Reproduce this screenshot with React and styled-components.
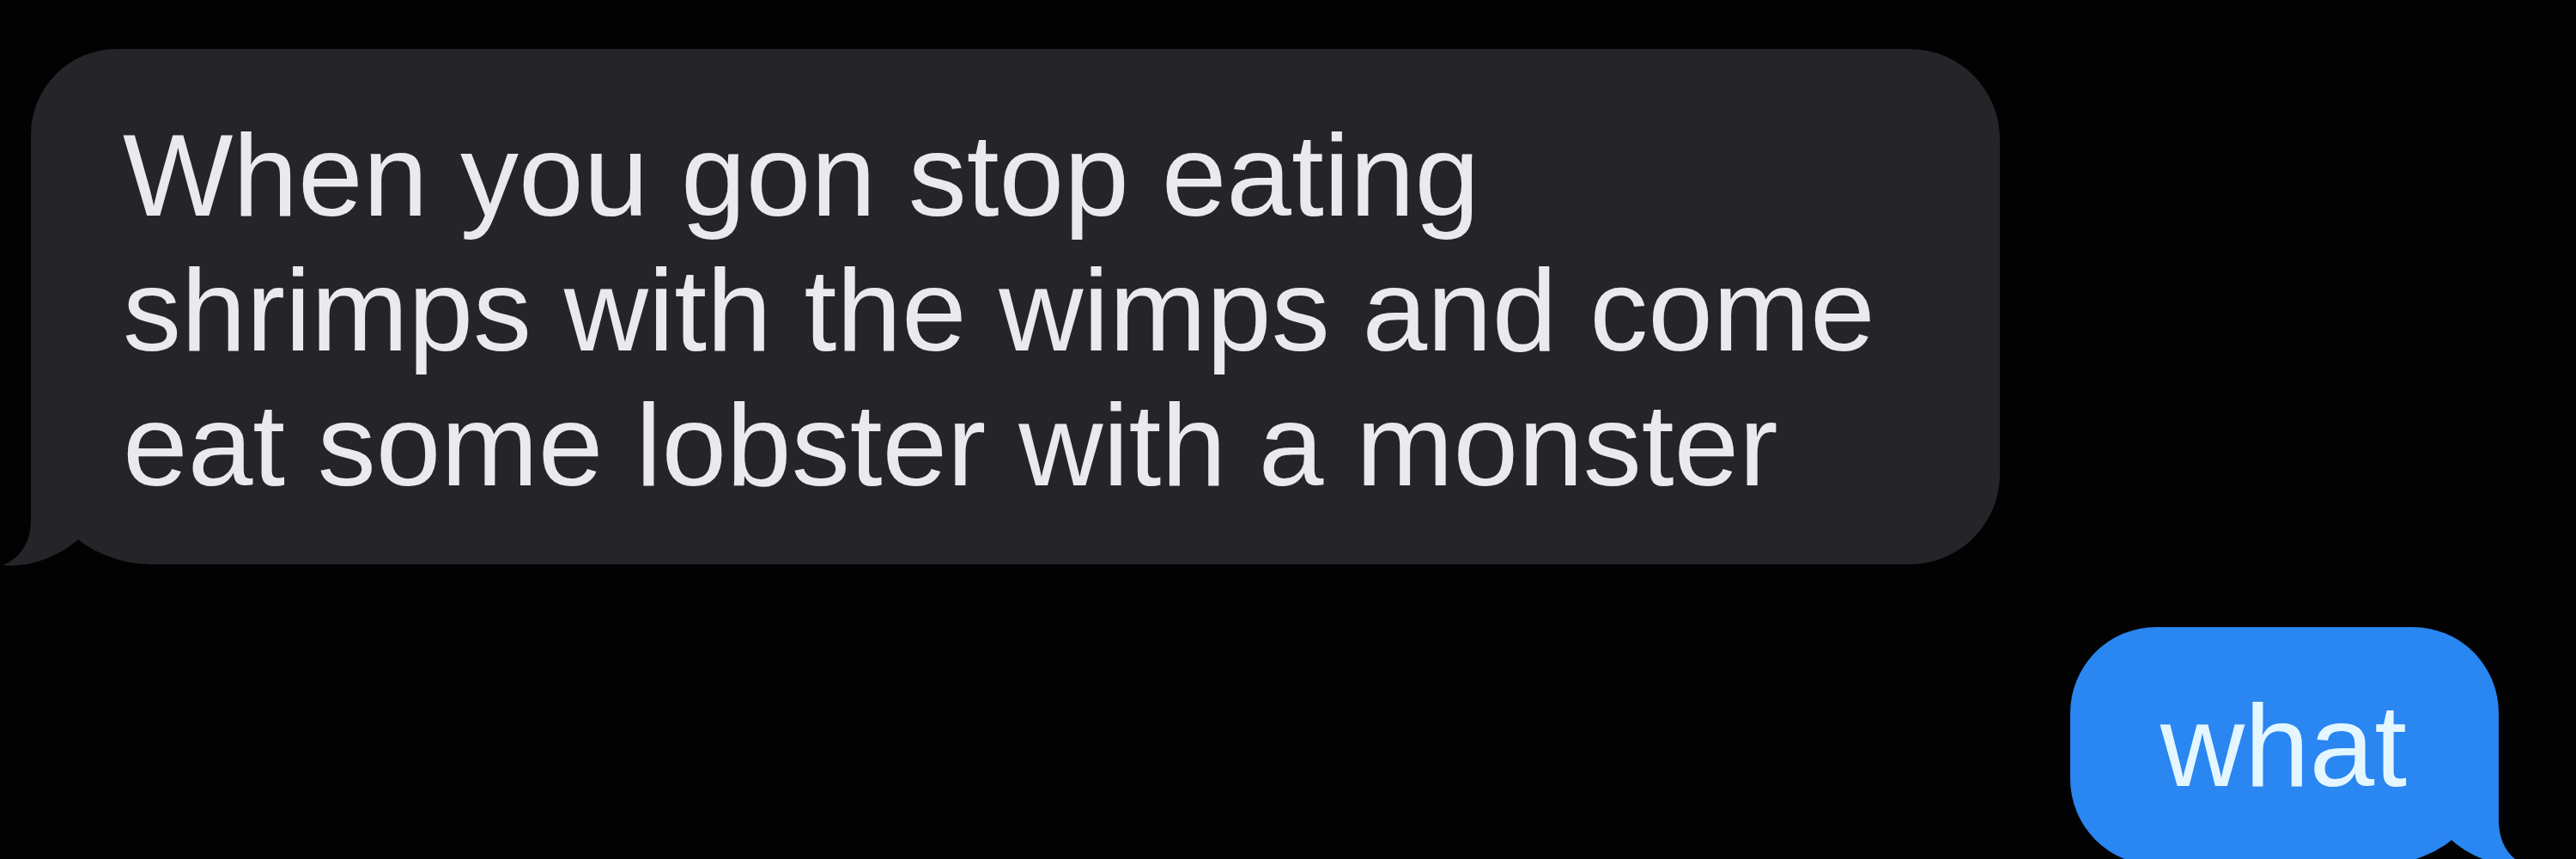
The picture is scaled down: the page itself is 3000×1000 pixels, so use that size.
import React from 'react';
import styled, { createGlobalStyle } from 'styled-components';

const GlobalStyle = createGlobalStyle`
  html, body {
    margin: 0;
    padding: 0;
    background: #020203;
  }
  body {
    font-family: 'Liberation Sans', Arial, sans-serif;
  }
`;

const colors = {
  them: { bg: '#252529', fg: '#eaeaed' },
  me: { bg: '#2a86f0', fg: '#e4f6ff' },
};

const Thread = styled.div`
  display: flex;
  flex-direction: column;
  gap: 73px;
  padding: 57px 90px 0 36px;
  height: 1000px;
  box-sizing: border-box;
  overflow: hidden;
`;

const Bubble = styled.div`
  position: relative;
  align-self: ${({ $from }) => ($from === 'me' ? 'flex-end' : 'flex-start')};
  background: ${({ $from }) => colors[$from].bg};
  color: ${({ $from }) => colors[$from].fg};
  font-size: 136px;
  line-height: 157px;
  white-space: nowrap;
  padding: ${({ $from }) => ($from === 'me' ? '60px 107px 60px 105px' : '69px 145px 60px 107px')};
  border-radius: ${({ $from }) =>
    $from === 'me' ? '100px 100px 140px 100px' : '100px 105px 105px 140px'};
`;

const TailSvg = styled.svg`
  position: absolute;
  bottom: -5px;
  width: 160px;
  height: 170px;
  overflow: visible;
  ${({ $from }) => ($from === 'me' ? 'right: -35px;' : 'left: -35px;')}
`;

const Tail = ({ from }) => {
  const mine = from === 'me';
  return (
    <TailSvg $from={from} viewBox={mine ? '-125 -165 160 170' : '-35 -165 160 170'}>
      <path
        fill={colors[from].bg}
        transform={mine ? 'scale(-1 1)' : undefined}
        d="M0,-160 L0,-52 C0,-26 -12,-7 -33,1 C-2,4 34,-9 57,-31 L100,-100 L100,-160 Z"
      />
    </TailSvg>
  );
};

export default function App() {
  return (
    <>
      <GlobalStyle />
      <Thread>
        <Bubble $from="them">
          When you gon stop eating
          <br />
          shrimps with the wimps and come
          <br />
          eat some lobster with a monster
          <Tail from="them" />
        </Bubble>
        <Bubble $from="me">
          what
          <Tail from="me" />
        </Bubble>
      </Thread>
    </>
  );
}
